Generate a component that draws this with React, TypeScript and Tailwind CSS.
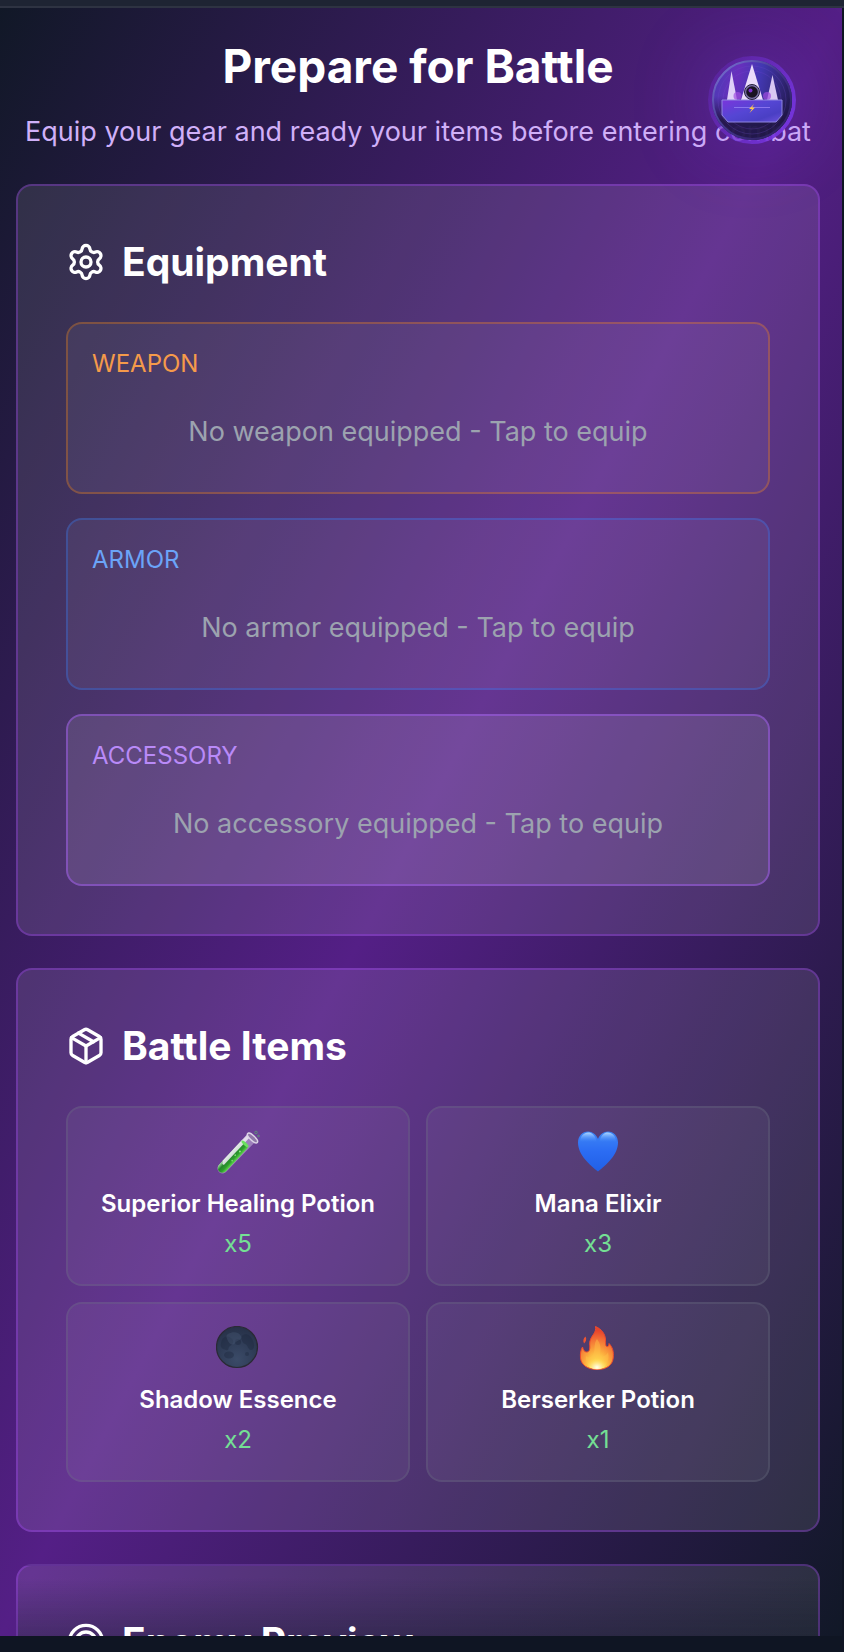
import React from "react";
import { Package, Settings, Target } from "lucide-react";

const font = "font-['Inter','Noto_Sans',sans-serif]";

function TestTube() {
  return (
    <svg viewBox="0 0 44 44" className="size-11" aria-hidden="true">
      <defs>
        <linearGradient id="liquid" x1="0" y1="0" x2="1" y2="0">
          <stop offset="0" stopColor="#a4dca4" />
          <stop offset="0.35" stopColor="#23862a" />
          <stop offset="0.7" stopColor="#2f9e2f" />
          <stop offset="1" stopColor="#5fdc4a" />
        </linearGradient>
      </defs>
      <path d="M32.500 4.500L40 11 10.500 41.500a5 5 0 0 1-8-6z" fill="#cdbfe0" opacity="0.500" />
      <g transform="translate(6.500 38) rotate(43)">
        <path d="M-4.800 -34.500L4.800 -32V0a4.800 4.800 0 0 1-9.600 0z" fill="url(#liquid)" />
        <path d="M-4.800 -44h3.800V-3h-2l-1.800-3z" fill="#f1ecf6" opacity="0.850" />
        <ellipse cx="0" cy="-33" rx="4.500" ry="1.600" fill="#6ce060" />
        <circle cx="1.500" cy="-24" r="0.900" fill="#9cf08c" />
        <circle cx="0.500" cy="-18" r="0.800" fill="#8fe880" />
        <circle cx="2" cy="-12" r="0.800" fill="#7fe070" />
      </g>
      <ellipse cx="36.500" cy="8" rx="6.500" ry="2.400" transform="rotate(43 36.500 8)" fill="#8f78a8" stroke="#ddd4e6" strokeWidth="1.500" />
      <circle cx="40" cy="2.500" r="1.300" fill="none" stroke="#5d8f78" />
      <circle cx="42.500" cy="6" r="0.900" fill="none" stroke="#5d8f78" />
    </svg>
  );
}

function BlueHeart() {
  return (
    <svg viewBox="0 0 44 44" className="size-11" aria-hidden="true">
      <defs>
        <linearGradient id="heart" x1="0" y1="0" x2="0" y2="1">
          <stop offset="0" stopColor="#3f86f5" />
          <stop offset="0.5" stopColor="#2b6cf3" />
          <stop offset="1" stopColor="#2160e6" />
        </linearGradient>
        <linearGradient id="shine" x1="0" y1="0" x2="0" y2="1">
          <stop offset="0" stopColor="#b4dcff" stopOpacity="0.950" />
          <stop offset="1" stopColor="#4a90ff" stopOpacity="0" />
        </linearGradient>
      </defs>
      <path
        d="M22 41.500C14 35 2 25 2 12.500C2 6 6.500 1.500 12 1.500c4.500 0 8 2.800 10 7.500C24 4.300 27.500 1.500 32 1.500C37.500 1.500 42 6 42 12.500C42 25 30 35 22 41.500z"
        fill="url(#heart)"
      />
      <path d="M4 12C4 6 8 2.500 12 2.500s7.500 2.500 8.500 9.500z" fill="url(#shine)" />
      <path d="M23.500 12C24.500 5 28 2.500 32 2.500s8 3.500 8 9.500z" fill="url(#shine)" />
    </svg>
  );
}

function DarkMoon() {
  return (
    <svg viewBox="0 0 44 44" className="size-11" aria-hidden="true">
      <defs>
        <radialGradient id="moon" cx="0.5" cy="0.8" r="0.8">
          <stop offset="0" stopColor="#3b4b68" />
          <stop offset="0.6" stopColor="#2e3b55" />
          <stop offset="1" stopColor="#263047" />
        </radialGradient>
      </defs>
      <circle cx="21" cy="21" r="20.500" fill="url(#moon)" stroke="#2a2a34" strokeWidth="1.200" />
      <g fill="#1d273d" opacity="0.400">
        <path d="M5 17c1-6 6-8 10-5s2 6-1 8 0 5-4 4-6-3-5-7z" />
        <path d="M27 9c4-2 8 1 10 6s1 9-2 9-3-5-6-6-5-7-2-9z" />
        <ellipse cx="13" cy="29" rx="5" ry="3.500" />
        <circle cx="22" cy="16" r="3" />
        <circle cx="31" cy="28" r="2" />
      </g>
      <path d="M12 8c5-3 11-2 13 2s-4 4-6 7-6 1-7-2-3-5 0-7z" fill="#4b5b78" opacity="0.350" />
    </svg>
  );
}

function Flame() {
  return (
    <svg viewBox="0 0 44 44" className="size-11" aria-hidden="true">
      <defs>
        <radialGradient id="flame" cx="0.5" cy="0.950" r="0.850">
          <stop offset="0" stopColor="#fff9b0" />
          <stop offset="0.200" stopColor="#ffe04f" />
          <stop offset="0.480" stopColor="#fba63c" />
          <stop offset="0.800" stopColor="#f26a35" />
          <stop offset="1" stopColor="#e8452c" />
        </radialGradient>
        <radialGradient id="core" cx="0.5" cy="0.850" r="0.600">
          <stop offset="0" stopColor="#fffff0" />
          <stop offset="1" stopColor="#ffe14a" stopOpacity="0" />
        </radialGradient>
      </defs>
      <path
        d="M19.500 0.500c6 2.500 9.500 7.500 10 12.500c.3 3.500-.5 6 1 7.500c2 .5 2.500-1 2.500-3c3.500 3.500 5 8 4.200 14.500c-.7 7-6.500 11.500-16.200 11.500S5 38.500 4.500 32c-.4-4.500.3-8 2-11c.7 3 2 5 4.200 5c2.800 0 3.300-3 3-6.500c-.5-5 1.500-8 4-11.500c1.700-2.500 2.300-5 1.800-7.500z"
        fill="url(#flame)"
        stroke="#ec4a2e"
        strokeWidth="1"
      />
      <path d="M9.500 10.500c1.500 2.500.5 5-1.500 7c-1.200-2.500-.8-5.500 1.500-7z" fill="#ee5431" />
      <path d="M21 13c4 5 4 10 3 15s7 2 8-2c2 9-2 16-11 16S9 37 10 30c3 3 7 1 8-4s0-9 3-13z" fill="#ffc04a" opacity="0.450" />
      <ellipse cx="21" cy="36" rx="10" ry="7.500" fill="url(#core)" />
    </svg>
  );
}

function Orb() {
  return (
    <svg viewBox="0 0 88 88" className="size-[88px]" aria-hidden="true">
      <defs>
        <linearGradient id="disc" x1="0" y1="0.300" x2="1" y2="0.500">
          <stop offset="0" stopColor="#4d3cb8" />
          <stop offset="0.280" stopColor="#6a30c0" />
          <stop offset="0.550" stopColor="#4339b6" />
          <stop offset="0.800" stopColor="#332a80" />
          <stop offset="1" stopColor="#211a50" />
        </linearGradient>
        <linearGradient id="shade" x1="0" y1="0" x2="0" y2="1">
          <stop offset="0.450" stopColor="#1f1648" stopOpacity="0" />
          <stop offset="0.750" stopColor="#1e1540" stopOpacity="0.900" />
        </linearGradient>
        <linearGradient id="rim" x1="0" y1="0" x2="1" y2="1">
          <stop offset="0" stopColor="#8078dc" />
          <stop offset="0.500" stopColor="#41348c" />
          <stop offset="1" stopColor="#2a1c58" />
        </linearGradient>
        <linearGradient id="halo" x1="0" y1="0" x2="1" y2="0.600">
          <stop offset="0" stopColor="#6427b8" stopOpacity="0.450" />
          <stop offset="1" stopColor="#7434dc" stopOpacity="0.950" />
        </linearGradient>
        <linearGradient id="base" x1="0" y1="0" x2="1" y2="1">
          <stop offset="0" stopColor="#7a35dc" />
          <stop offset="0.450" stopColor="#5546d4" />
          <stop offset="0.750" stopColor="#4a3fc4" />
          <stop offset="1" stopColor="#6d52dc" />
        </linearGradient>
      </defs>
      <circle cx="44" cy="44" r="42" fill="none" stroke="url(#halo)" strokeWidth="4" />
      <g opacity="0.960">
        <circle cx="44" cy="44" r="40" fill="url(#disc)" />
        <circle cx="44" cy="44" r="40" fill="url(#shade)" />
      </g>
      <circle cx="44" cy="44" r="39" fill="none" stroke="url(#rim)" strokeWidth="2" />
      <circle cx="44" cy="44" r="34" fill="none" stroke="#6b4cc8" strokeOpacity="0.250" />
      <circle cx="44" cy="44" r="29" fill="none" stroke="#7b4cd8" strokeOpacity="0.200" />
      <path d="M23.500 15L29 44H19z" fill="#e0cff8" />
      <path d="M44 8L55 44H33z" fill="#eadcfb" />
      <path d="M64.500 19L70 44H59z" fill="#d8c8f2" />
      <circle cx="29.500" cy="40" r="4" fill="#a04be0" opacity="0.700" />
      <circle cx="59" cy="40" r="4" fill="#a04be0" opacity="0.700" />
      <path d="M14 44h60v15l-6 7H20l-6-7z" fill="url(#base)" stroke="#8f86e0" strokeWidth="1" />
      <path d="M26 51.500h36" stroke="#8a74ee" strokeWidth="1" />
      <circle cx="44" cy="36" r="7.500" fill="#7b72a8" stroke="#28223e" strokeWidth="1" />
      <circle cx="44" cy="36" r="5.800" fill="#191222" />
      <circle cx="42.500" cy="34.500" r="2" fill="#7b2fd0" />
      <path d="M46 48l-5 5h3l-2.500 4 5.500-5.500h-3z" fill="#ffc94a" />
    </svg>
  );
}

type PanelProps = {
  title: string;
  icon: React.ReactNode;
  shade?: string;
  children?: React.ReactNode;
};

function Panel({ title, icon, shade = "", children }: PanelProps) {
  return (
    <section className={`rounded-2xl border-2 border-purple-500/30 bg-white/10 p-12 ${shade}`}>
      <h2 className="mb-8 flex items-center gap-4 text-[39px] leading-[56px] font-bold text-white">
        {icon}
        {title}
      </h2>
      {children}
    </section>
  );
}

const slots = [
  {
    name: "WEAPON",
    empty: "No weapon equipped - Tap to equip",
    box: "border-orange-400/30 bg-white/5",
    label: "text-[#f59a4a]",
  },
  {
    name: "ARMOR",
    empty: "No armor equipped - Tap to equip",
    box: "border-blue-500/30 bg-white/5",
    label: "text-[#6ba4f8]",
  },
  {
    name: "ACCESSORY",
    empty: "No accessory equipped - Tap to equip",
    box: "border-[#a25cf0]/50 bg-white/10",
    label: "text-[#b98af8]",
  },
];

const items = [
  { name: "Superior Healing Potion", count: "x5", icon: <TestTube /> },
  { name: "Mana Elixir", count: "x3", icon: <BlueHeart /> },
  { name: "Shadow Essence", count: "x2", icon: <DarkMoon /> },
  { name: "Berserker Potion", count: "x1", icon: <Flame /> },
];

export default function App() {
  return (
    <div className={`flex h-screen flex-col bg-[#0f1523] ${font}`}>
      <div className="h-2 shrink-0 border-b-2 border-[#2e3342] bg-[#1e2433]" />
      <main className="relative mr-0.5 min-h-0 flex-1 overflow-hidden bg-linear-to-br/srgb from-[#111827] via-[#541f86] to-[#111827] pt-6 pr-[22px] pl-4">
        <header className="mb-8 text-center">
          <h1 className="mb-3 text-[46px] leading-[68px] font-bold text-white">Prepare for Battle</h1>
          <p className="text-[27px] leading-10 whitespace-nowrap text-[#d0b0f8]">
            Equip your gear and ready your items before entering combat
          </p>
        </header>

        <button
          type="button"
          aria-label="Open companion menu"
          className="absolute top-12 right-[46px] rounded-full shadow-[0_0_80px_rgba(124,58,237,0.3)]"
        >
          <Orb />
        </button>

        <div className="flex flex-col gap-8">
          <Panel title="Equipment" icon={<Settings className="size-10" strokeWidth={2} />}>
            <div className="flex flex-col gap-6">
              {slots.map((slot) => (
                <button
                  key={slot.name}
                  type="button"
                  className={`block w-full rounded-2xl border-2 p-6 text-left ${slot.box}`}
                >
                  <span className={`mb-4 block text-[24px] leading-8 ${slot.label}`}>{slot.name}</span>
                  <span className="block py-4 text-center text-[27px] leading-10 text-[#9ca3af]">{slot.empty}</span>
                </button>
              ))}
            </div>
          </Panel>

          <Panel title="Battle Items" icon={<Package className="size-10" strokeWidth={2} />}>
            <div className="grid grid-cols-2 gap-4">
              {items.map((item) => (
                <button
                  key={item.name}
                  type="button"
                  className="flex flex-col items-center rounded-2xl border-2 border-gray-500/30 bg-white/5 p-6"
                >
                  <span className="mb-4 flex h-10 items-center">{item.icon}</span>
                  <span className="mb-2 text-[24px] leading-8 font-semibold whitespace-nowrap text-white">
                    {item.name}
                  </span>
                  <span className="text-[24px] leading-8 text-[#74e094]">{item.count}</span>
                </button>
              ))}
            </div>
          </Panel>

          <Panel
            title="Enemy Preview"
            icon={<Target className="size-10" strokeWidth={2} />}
            shade="bg-[linear-gradient(to_bottom,transparent_12px,rgba(17,24,39,0.4)_80px)]"
          />
        </div>
      </main>
      <div className="h-4 shrink-0 bg-[#0f1523]" />
    </div>
  );
}
